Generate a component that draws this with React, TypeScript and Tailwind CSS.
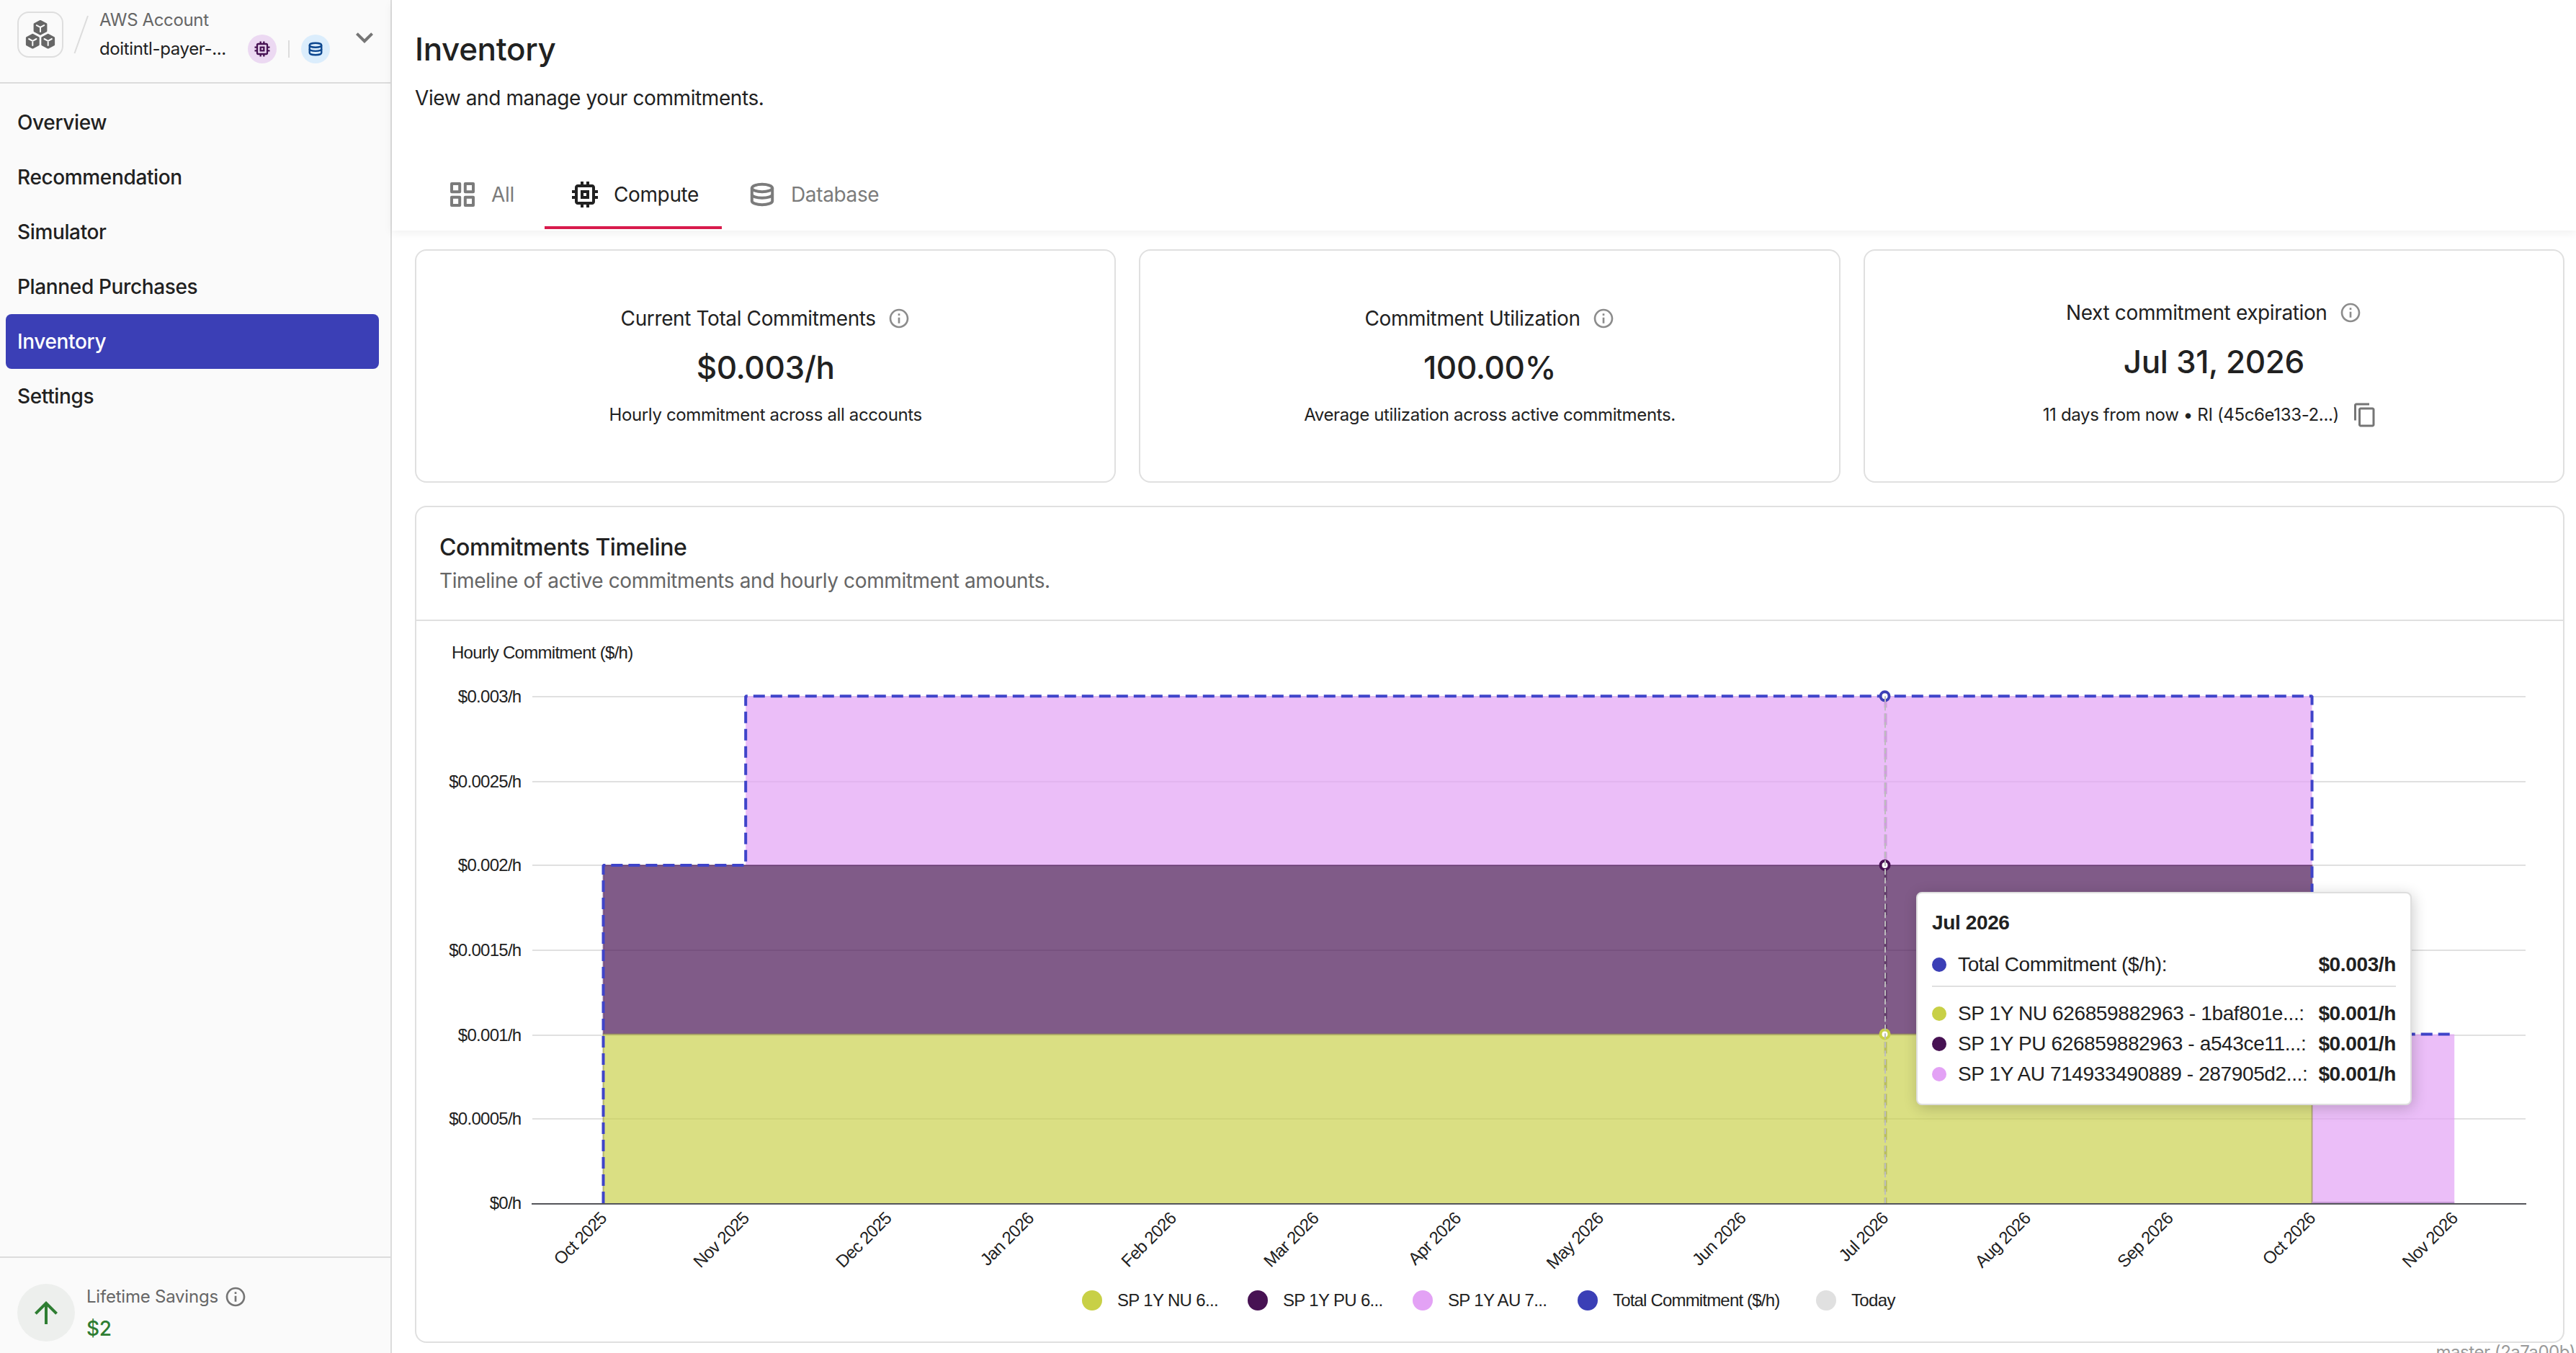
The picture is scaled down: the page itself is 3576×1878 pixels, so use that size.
import React from "react";

const NAV = ["Overview", "Recommendation", "Simulator", "Planned Purchases", "Inventory", "Settings"];

const MONTHS = [
  "Oct 2025", "Nov 2025", "Dec 2025", "Jan 2026", "Feb 2026", "Mar 2026", "Apr 2026",
  "May 2026", "Jun 2026", "Jul 2026", "Aug 2026", "Sep 2026", "Oct 2026", "Nov 2026",
];

const TICKS = [
  { label: "$0.003/h", y: 967 },
  { label: "$0.0025/h", y: 1085 },
  { label: "$0.002/h", y: 1201 },
  { label: "$0.0015/h", y: 1319 },
  { label: "$0.001/h", y: 1437 },
  { label: "$0.0005/h", y: 1553 },
];

const LEGEND = [
  { label: "SP 1Y NU 6...", color: "#c8d046", width: "w-[230px]" },
  { label: "SP 1Y PU 6...", color: "#471253", width: "w-[229px]" },
  { label: "SP 1Y AU 7...", color: "#e3a2f5", width: "w-[229px]" },
  { label: "Total Commitment ($/h)", color: "#3b3fb6", width: "w-[331px]" },
  { label: "Today", color: "#e0e0e0", width: "w-[110px]" },
];

const TOOLTIP_ROWS = [
  { label: "SP 1Y NU 626859882963 - 1baf801e...:", color: "#c8d046" },
  { label: "SP 1Y PU 626859882963 - a543ce11...:", color: "#471253" },
  { label: "SP 1Y AU 714933490889 - 287905d2...:", color: "#e3a2f5" },
];

type IconProps = { className?: string };

function Glyph({ d, className }: { d: string; className?: string }) {
  return (
    <svg viewBox="0 0 24 24" className={className} fill="currentColor">
      <path d={d} />
    </svg>
  );
}

const InfoIcon = (p: IconProps) => (
  <Glyph {...p} d="M11 7h2v2h-2zm0 4h2v6h-2zm1-9C6.48 2 2 6.48 2 12s4.48 10 10 10 10-4.48 10-10S17.52 2 12 2m0 18c-4.41 0-8-3.59-8-8s3.59-8 8-8 8 3.59 8 8-3.59 8-8 8" />
);
const ChipIcon = (p: IconProps) => (
  <Glyph {...p} d="M15 9H9v6h6zm-2 4h-2v-2h2zm8-2V9h-2V7c0-1.1-.9-2-2-2h-2V3h-2v2h-2V3H9v2H7c-1.1 0-2 .9-2 2v2H3v2h2v2H3v2h2v2c0 1.1.9 2 2 2h2v2h2v-2h2v2h2v-2h2c1.1 0 2-.9 2-2v-2h2v-2h-2v-2zm-4 6H7V7h10z" />
);
const ArrowUpIcon = (p: IconProps) => (
  <Glyph {...p} d="m4 12 1.41 1.41L11 7.83V20h2V7.83l5.58 5.59L20 12l-8-8z" />
);
const ChevronDownIcon = (p: IconProps) => (
  <Glyph {...p} d="M7.41 8.59 12 13.17l4.59-4.58L18 10l-6 6-6-6z" />
);
const CopyIcon = (p: IconProps) => (
  <Glyph {...p} d="M16 1H4c-1.1 0-2 .9-2 2v14h2V3h12zm3 4H8c-1.1 0-2 .9-2 2v14c0 1.1.9 2 2 2h11c1.1 0 2-.9 2-2V7c0-1.1-.9-2-2-2m0 16H8V7h11z" />
);

function DatabaseIcon({ className }: IconProps) {
  return (
    <svg viewBox="0 0 24 24" className={className} fill="none" stroke="currentColor" strokeWidth={2}>
      <ellipse cx="12" cy="7.5" rx="7.1" ry="2.6" />
      <path d="M4.9 7.5v9c0 1.5 3.2 2.6 7.1 2.6s7.1-1.1 7.1-2.6v-9" />
      <path d="M4.9 11.9c0 1.5 3.2 2.5 7.1 2.5s7.1-1 7.1-2.5" />
    </svg>
  );
}

function GridIcon({ className }: IconProps) {
  return (
    <svg viewBox="0 0 48 48" className={className} fill="none" stroke="currentColor" strokeWidth={4} strokeLinejoin="round">
      <rect x="9" y="9" width="11.2" height="11.2" />
      <rect x="27.8" y="9" width="11.2" height="11.2" />
      <rect x="9" y="27.8" width="11.2" height="11.2" />
      <rect x="27.8" y="27.8" width="11.2" height="11.2" />
    </svg>
  );
}

function CubesIcon({ className }: IconProps) {
  const cubes = [
    [24, 14.3],
    [13.3, 33.2],
    [34.7, 33.2],
  ];
  return (
    <svg viewBox="0 0 48 48" className={className}>
      {cubes.map(([x, y]) => (
        <g key={x} transform={`translate(${x} ${y})`}>
          <path d="M0-9 8-4.7V4.7L0 9-8 4.7V-4.7Z" fill="#666" stroke="#666" strokeWidth="2.8" strokeLinejoin="round" />
          <path d="M-5.2-3.2 0-.4 5.2-3.2M0-.4V5.8" fill="none" stroke="#fafafa" strokeWidth="2" strokeLinecap="round" />
        </g>
      ))}
    </svg>
  );
}

function Sidebar() {
  return (
    <aside className="flex w-[544px] shrink-0 flex-col border-r-2 border-[#dcdcdc] bg-[#fafafa]">
      <div className="flex h-[116px] shrink-0 items-start border-b-2 border-[#dcdcdc] pl-6">
        <div className="mt-4 flex size-16 items-center justify-center rounded-2xl border-2 border-[#dedede]">
          <CubesIcon className="size-12 shrink-0" />
        </div>
        <svg viewBox="0 0 24 56" className="mt-5 ml-[13px] h-14 w-6">
          <path d="M21 2 2.5 54" stroke="#dcdcdc" strokeWidth="2" />
        </svg>
        <div className="mt-2 ml-[13px] w-[320px] text-[24px] leading-[40px]">
          <div className="text-[#666]">AWS Account</div>
          <div className="flex items-center">
            <span className="w-[206px] text-[#212121]">doitintl-payer-...</span>
            <span className="flex size-10 items-center justify-center rounded-full bg-[#ecd9f2] text-[#471253]">
              <ChipIcon className="size-7" />
            </span>
            <span className="mx-4 h-6 w-0.5 bg-[#dcdcdc]" />
            <span className="flex size-10 items-center justify-center rounded-full bg-[#dbedfc] text-[#0d478f]">
              <DatabaseIcon className="size-7" />
            </span>
          </div>
        </div>
        <ChevronDownIcon className="mt-7 ml-6 size-12 shrink-0 text-[#757575]" />
      </div>
      <nav className="flex grow flex-col px-2 pt-4">
        {NAV.map((item) => (
          <a
            key={item}
            className={
              item === "Inventory"
                ? "mr-2 flex h-[76px] items-center rounded-lg bg-[#3b3fb6] pl-4 text-[28px] font-medium text-white"
                : "mr-2 flex h-[76px] items-center rounded-lg pl-4 text-[28px] font-medium text-[#212121]"
            }
          >
            {item}
          </a>
        ))}
      </nav>
      <div className="flex h-[134px] shrink-0 items-start border-t-2 border-[#dcdcdc] pl-6">
        <div className="mt-9 flex size-20 items-center justify-center rounded-full bg-[#edefed] text-[#2e7d32]">
          <ArrowUpIcon className="size-12" />
        </div>
        <div className="mt-[34px] ml-4">
          <div className="flex h-10 items-center gap-2 text-[24px] tracking-[-0.22px] text-[#666]">
            <span>Lifetime Savings</span>
            <InfoIcon className="size-8 text-[#757575]" />
          </div>
          <div className="text-[28px] leading-[48px] font-medium text-[#2e7d32]">$2</div>
        </div>
      </div>
    </aside>
  );
}

function Header() {
  return (
    <header className="h-[320px] shrink-0 bg-white pt-10 pl-8 shadow-[0_4px_12px_rgba(0,0,0,0.06)]">
      <h1 className="text-[44px] leading-[56px] font-medium">Inventory</h1>
      <p className="mt-5 text-[28px] leading-[40px] tracking-[-0.4px]">View and manage your commitments.</p>
      <div className="mt-[66px] flex h-24 text-[28px] text-[#7b7b7b]">
        <div className="flex w-[180px] items-center justify-center gap-4">
          <GridIcon className="size-12" />
          <span>All</span>
        </div>
        <div className="flex w-[246px] items-center justify-center gap-4 border-b-4 border-[#d81b4c] pt-1 text-[#212121]">
          <ChipIcon className="size-12" />
          <span>Compute</span>
        </div>
        <div className="flex items-center gap-4 px-8">
          <DatabaseIcon className="size-12" />
          <span>Database</span>
        </div>
      </div>
    </header>
  );
}

function StatCard({ label, value, children }: { label: string; value: string; children: React.ReactNode }) {
  return (
    <section className="flex flex-1 flex-col items-center justify-center gap-4 rounded-2xl border-2 border-[#e0e0e0] bg-white">
      <div className="flex h-10 items-center gap-4 text-[28px] tracking-[-0.38px]">
        <span>{label}</span>
        <InfoIcon className="size-8 text-[#8c8c8c]" />
      </div>
      <div className="text-[44px] leading-[64px] font-medium">{value}</div>
      <div className="flex items-center text-[24px] leading-[36px]">{children}</div>
    </section>
  );
}

const X0 = 837.5;
const STEP = 197.67;
const Y3 = 966.3;
const Y2 = 1200.9;
const Y1 = 1435.4;
const Y0 = 1670;
const X_NOV = X0 + STEP;
const X_JUL = X0 + STEP * 9;
const X_OCT = X0 + STEP * 12;
const X_END = X0 + STEP * 13;

function TimelineChart() {
  return (
    <svg
      viewBox="578 862 2980 918"
      className="block h-[918px] w-[2980px] [font-family:'Liberation_Sans',Arial,sans-serif] text-[24px] tracking-[-0.72px]"
      fill="#212121"
    >
      <text x="627" y="914">Hourly Commitment ($/h)</text>
      {TICKS.map((t) => (
        <g key={t.label}>
          <text x="723.5" y={t.y + 7.5} textAnchor="end">{t.label}</text>
          <path d={`M739 ${t.y}H3506`} stroke="#e0e0e0" strokeWidth="2" />
        </g>
      ))}
      <text x="723.5" y="1678" textAnchor="end">$0/h</text>

      <path d={`M${X_JUL + 1} ${Y3}V${Y0}`} stroke="#999" strokeWidth="4" strokeDasharray="16 8" />

      <path d={`M${X0} ${Y1}H${X_OCT}V${Y0}H${X0}Z`} fill="#c8d046" fillOpacity="0.67" />
      <path d={`M${X0} ${Y2}H${X_OCT}V${Y1}H${X0}Z`} fill="#471253" fillOpacity="0.69" />
      <path d={`M${X_NOV} ${Y3}H${X_OCT}V${Y2}H${X_NOV}ZM${X_OCT} ${Y1}H${X_END}V${Y0}H${X_OCT}Z`} fill="#e3a2f5" fillOpacity="0.7" />
      <path d={`M${X0} ${Y0}V${Y1}H${X_OCT}V${Y0}`} fill="none" stroke="#8f8a4a" strokeOpacity="0.6" strokeWidth="2" />
      <path d={`M${X0} ${Y1}V${Y2}H${X_OCT}V${Y1}`} fill="none" stroke="#471253" strokeOpacity="0.4" strokeWidth="2" />
      <path d={`M${X_OCT} 1669H${X_END}`} stroke="#c79ad6" strokeWidth="2" />

      <path
        d={`M${X0} ${Y0}V${Y2}H${X_NOV}V${Y3}H${X_OCT}V${Y1}H${X_END}`}
        fill="none"
        stroke="#3f44c9"
        strokeWidth="4"
        strokeDasharray="16 8"
        strokeLinejoin="bevel"
      />
      <path d="M738 1671H3507" stroke="#54555a" strokeWidth="2" />

      <circle cx={X_JUL} cy={Y3} r="6" fill="#fff" stroke="#3b3fb6" strokeWidth="4" />
      <circle cx={X_JUL} cy={Y2} r="6" fill="#fff" stroke="#471253" strokeWidth="4" />
      <circle cx={X_JUL} cy={Y1} r="6" fill="#fff" stroke="#c8d046" strokeWidth="4" />
      <path d={`M2617 ${Y3}V${Y0}`} stroke="#bdbdbd" strokeWidth="2" strokeDasharray="8 4" />

      {MONTHS.map((m, i) => (
        <text key={m} transform={`translate(${X0 + STEP * i} 1686.5) rotate(-45)`} y="8.5" textAnchor="end">
          {m}
        </text>
      ))}
    </svg>
  );
}

function Tooltip() {
  return (
    <div className="absolute top-[376px] left-[2082px] w-[688px] rounded-lg border-2 border-[#dedede] bg-white p-5 [font-family:'Liberation_Sans',Arial,sans-serif] text-[28px] leading-[42px] tracking-[-0.37px] shadow-[2px_4px_20px_rgba(0,0,0,0.2)]">
      <div className="font-bold">Jul 2026</div>
      <div className="mt-4 flex items-center">
        <span className="size-5 rounded-full bg-[#3b3fb6]" />
        <span className="ml-4 grow">Total Commitment ($/h):</span>
        <span className="font-bold">$0.003/h</span>
      </div>
      <div className="mt-2 mb-4 h-0.5 bg-[#e0e0e0]" />
      {TOOLTIP_ROWS.map((r) => (
        <div key={r.label} className="flex items-center">
          <span className="size-5 rounded-full" style={{ backgroundColor: r.color }} />
          <span className="ml-4 grow whitespace-nowrap">{r.label}</span>
          <span className="font-bold">$0.001/h</span>
        </div>
      ))}
    </div>
  );
}

export default function App() {
  return (
    <div className="relative flex h-[1878px] w-[3576px] overflow-hidden bg-white [font-family:Inter,sans-serif] tracking-[-0.36px] text-[#212121]">
      <Sidebar />
      <main className="flex grow flex-col">
        <Header />
        <div className="flex flex-col gap-8 px-8 pt-[26px] pr-4">
          <div className="flex h-[324px] gap-8">
            <StatCard label="Current Total Commitments" value="$0.003/h">
              Hourly commitment across all accounts
            </StatCard>
            <StatCard label="Commitment Utilization" value="100.00%">
              Average utilization across active commitments.
            </StatCard>
            <StatCard label="Next commitment expiration" value="Jul 31, 2026">
              <span>11 days from now • RI (45c6e133-2...)</span>
              <span className="mr-0.5 ml-2.5 flex size-[52px] items-center justify-center text-[#757575]">
                <CopyIcon className="size-9" />
              </span>
            </StatCard>
          </div>
          <section className="h-[1162px] rounded-2xl border-2 border-[#e0e0e0] bg-white">
            <div className="h-[158px] border-b-2 border-[#e0e0e0] px-8 pt-8">
              <h2 className="text-[32px] leading-[48px] font-medium tracking-[-0.42px]">Commitments Timeline</h2>
              <p className="text-[28px] leading-[44px] tracking-[-0.39px] text-[#666]">
                Timeline of active commitments and hourly commitment amounts.
              </p>
            </div>
            <div className="relative">
              <TimelineChart />
              <div className="flex pt-[11px] pl-[924px] [font-family:'Liberation_Sans',Arial,sans-serif] text-[24px] leading-[28px] tracking-[-0.66px]">
                {LEGEND.map((l) => (
                  <div key={l.label} className={l.width}>
                    <div className="flex items-center gap-[21px] whitespace-nowrap">
                      <span className="size-7 rounded-full" style={{ backgroundColor: l.color }} />
                      <span className={l.label.startsWith("Total") ? "tracking-[-0.82px]" : ""}>{l.label}</span>
                    </div>
                  </div>
                ))}
              </div>
              <Tooltip />
            </div>
          </section>
        </div>
      </main>
      <div className="absolute top-[1859px] right-px text-[24px] leading-[36px] tracking-[-0.46px] text-[#999]">master (2a7a00b)</div>
    </div>
  );
}
